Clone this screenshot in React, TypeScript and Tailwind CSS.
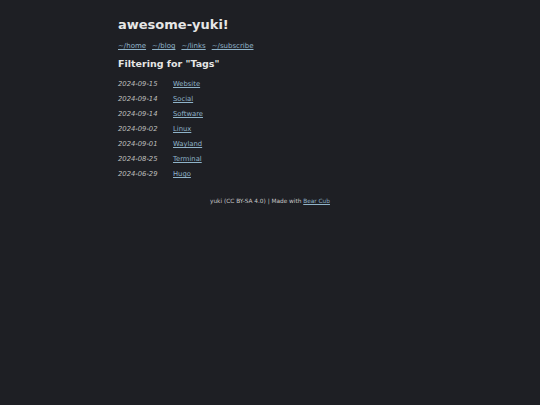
const posts = [
  { date: "2024-09-15", tag: "Website" },
  { date: "2024-09-14", tag: "Social" },
  { date: "2024-09-14", tag: "Software" },
  { date: "2024-09-02", tag: "Linux" },
  { date: "2024-09-01", tag: "Wayland" },
  { date: "2024-08-25", tag: "Terminal" },
  { date: "2024-06-29", tag: "Hugo" },
]

const nav = ["~/home", "~/blog", "~/links", "~/subscribe"]

export default function App() {
  return (
    <div
      className="min-h-[405px] w-full bg-[#1e1f24] text-[#dddddd]"
      style={{ fontFamily: '"DejaVu Sans", Verdana, sans-serif' }}
    >
      <div className="mx-auto w-[304px] pt-[17px]">
        <header>
          <h1 className="text-[13px] font-bold leading-[16px] text-[#e6e6e6]">
            awesome-yuki!
          </h1>
          <nav className="mt-[8px] flex gap-[6px] text-[7px] leading-[10px]">
            {nav.map((n) => (
              <a key={n} href="#" className="text-[#8fb3c9] underline">
                {n}
              </a>
            ))}
          </nav>
        </header>
        <main>
          <h3 className="mt-[7px] text-[9.5px] font-bold leading-[12px] text-[#e6e6e6]">
            Filtering for "Tags"
          </h3>
          <ul className="mt-[7px] flex flex-col">
            {posts.map((p, i) => (
              <li key={i} className="flex h-[15px] items-center text-[6.8px]">
                <span className="w-[55px] italic text-[#bfbfbf]">{p.date}</span>
                <a href="#" className="text-[#8fb3c9] underline">
                  {p.tag}
                </a>
              </li>
            ))}
          </ul>
        </main>
        <footer className="mt-[15px] text-center text-[5.8px] text-[#c8c8c8]">
          yuki (CC BY-SA 4.0) | Made with{" "}
          <a href="#" className="text-[#8fb3c9] underline">
            Bear Cub
          </a>
        </footer>
      </div>
    </div>
  )
}
